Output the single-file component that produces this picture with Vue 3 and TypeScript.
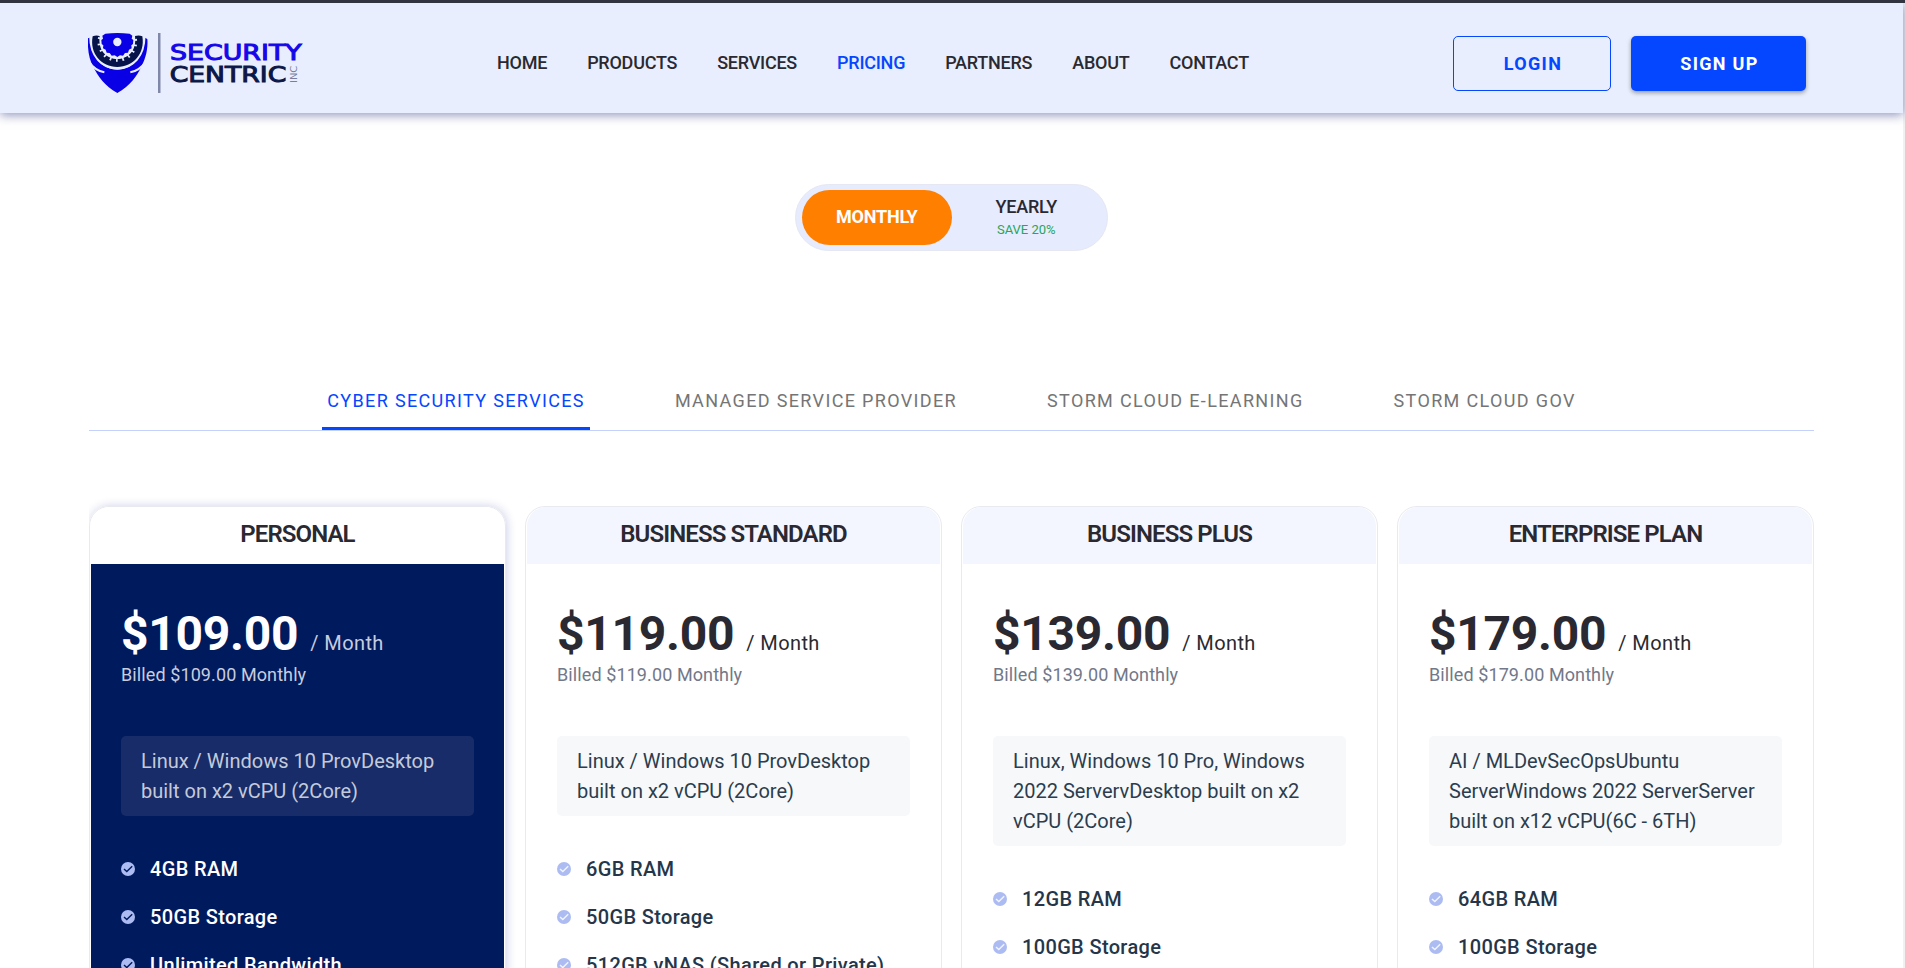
<script setup lang="ts">
import { ref } from 'vue'

interface Plan {
  name: string
  price: string
  description: string
  features: string[]
}

const navItems: string[] = ['HOME', 'PRODUCTS', 'SERVICES', 'PRICING', 'PARTNERS', 'ABOUT', 'CONTACT']
const tabs: string[] = [
  'CYBER SECURITY SERVICES',
  'MANAGED SERVICE PROVIDER',
  'STORM CLOUD E-LEARNING',
  'STORM CLOUD GOV',
]
const activeTab = ref(0)
const yearly = ref(false)

const plans: Plan[] = [
  {
    name: 'PERSONAL',
    price: '$109.00',
    description: 'Linux / Windows 10 ProvDesktop built on x2 vCPU (2Core)',
    features: ['4GB RAM', '50GB Storage', 'Unlimited Bandwidth'],
  },
  {
    name: 'BUSINESS STANDARD',
    price: '$119.00',
    description: 'Linux / Windows 10 ProvDesktop built on x2 vCPU (2Core)',
    features: ['6GB RAM', '50GB Storage', '512GB vNAS (Shared or Private)'],
  },
  {
    name: 'BUSINESS PLUS',
    price: '$139.00',
    description: 'Linux, Windows 10 Pro, Windows 2022 ServervDesktop built on x2 vCPU (2Core)',
    features: ['12GB RAM', '100GB Storage'],
  },
  {
    name: 'ENTERPRISE PLAN',
    price: '$179.00',
    description: 'AI / MLDevSecOpsUbuntu ServerWindows 2022 ServerServer built on x12 vCPU(6C - 6TH)',
    features: ['64GB RAM', '100GB Storage'],
  },
]
</script>

<template>
  <div class="page">
    <header class="header">
      <svg class="logo" viewBox="54 96 651 186" role="img" aria-label="Security Centric Inc">
        <path
          fill="#0a00e6"
          d="M54 115 L62 112 C60 168 96 209 142 209 C188 209 224 168 222 112 L232 117 C235 150 224 182 214 200 C201 228 180 257 142 279 C104 257 83 228 70 200 C58 180 52 150 54 115Z"
        />
        <path fill="none" stroke="#e8eefd" stroke-width="9" d="M62 108 C62 168 96 204 142 204 C188 204 222 168 222 108" />
        <path fill="none" stroke="#e8eefd" stroke-width="6" d="M56 184 Q74 211 103 217 M228 184 Q210 211 181 217" />
        <path fill="#06134a" d="M68 109 Q79 104 89 108 C83 154 112 177 142 177 C172 177 201 154 195 108 Q207 104 217 109 C226 160 190 201 142 201 C94 201 58 160 68 109Z" />
        <circle
          cx="142" cy="126" r="54" fill="none" stroke="#e8eefd" stroke-width="11"
          stroke-dasharray="5 13.85" stroke-dashoffset="11"
        />
        <path
          fill="#0a00e6"
          d="M106 101 Q142 97 179 101 L187 107 L185 116 L190 120 L189 132 L184 136 L185 145 L177 149 L174 158 L165 159 L159 167 L150 166 L142 171 L134 166 L125 167 L119 159 L110 158 L107 149 L99 145 L100 136 L95 132 L94 120 L99 116 L97 107Z"
        />
        <circle cx="142" cy="126" r="12.5" fill="#e8eefd" />
        <rect x="264" y="99" width="7.5" height="180" fill="#8088aa" />
        <g font-family="'DejaVu Sans', sans-serif" font-size="65" stroke-width="3">
          <text x="300" y="179.5" textLength="395" lengthAdjust="spacingAndGlyphs" fill="#1408e8" stroke="#1408e8">SECURITY</text>
          <text x="299" y="246.5" textLength="350" lengthAdjust="spacingAndGlyphs" fill="#0b1747" stroke="#0b1747">CENTRIC</text>
          <text transform="translate(682 249) rotate(-90)" font-size="25" textLength="52" lengthAdjust="spacingAndGlyphs" fill="#777e9e" stroke="none">INC</text>
        </g>
      </svg>
      <nav class="nav">
        <a v-for="item in navItems" :key="item" class="nav-link" :class="{ current: item === 'PRICING' }">{{ item }}</a>
      </nav>
      <div class="actions">
        <button class="button login">LOGIN</button>
        <button class="button signup">SIGN UP</button>
      </div>
    </header>

    <main class="main">
      <div class="toggle">
        <button class="period" :class="{ selected: !yearly }" @click="yearly = false">MONTHLY</button>
        <button class="period" :class="{ selected: yearly }" @click="yearly = true">
          YEARLY
          <span class="saving">SAVE 20%</span>
        </button>
      </div>

      <div class="tabs">
        <button
          v-for="(tab, i) in tabs" :key="tab" class="tab" :class="{ active: activeTab === i }"
          @click="activeTab = i"
        >{{ tab }}</button>
      </div>

      <section class="plans">
        <article v-for="(plan, i) in plans" :key="plan.name" class="card" :class="{ featured: i === 0 }">
          <h2 class="plan-name">{{ plan.name }}</h2>
          <div class="card-body">
            <div class="price-row">
              <span class="price">{{ plan.price }}</span>
              <span class="unit">/ Month</span>
            </div>
            <p class="billed">Billed {{ plan.price }} Monthly</p>
            <p class="description">{{ plan.description }}</p>
            <ul class="features">
              <li v-for="feature in plan.features" :key="feature" class="feature">
                <svg class="check" viewBox="0 0 14 14">
                  <circle cx="7" cy="7" r="7" />
                  <path d="M3 7.1 L5.8 9.6 L11.2 4.2" />
                </svg>
                {{ feature }}
              </li>
            </ul>
          </div>
        </article>
      </section>
    </main>
  </div>
</template>

<style>
html,
body {
  margin: 0;
  overflow: hidden;
}
</style>

<style scoped>
.page {
  box-sizing: border-box;
  height: 968px;
  overflow: hidden;
  border-top: 3px solid #32343f;
  background: linear-gradient(#f1f1f1, #f1f1f1) right / 2px 100% no-repeat #fff;
  font-family: Roboto, sans-serif;
  color: #2a2931;
}
.header {
  position: relative;
  box-sizing: border-box;
  display: flex;
  align-items: flex-start;
  width: 1903px;
  height: 110px;
  padding-left: 88px;
  background: #e8eefd;
  box-shadow: 0 2px 10px rgba(30, 40, 120, 0.5);
}
.logo {
  flex: none;
  width: 217px;
  height: 62px;
  margin-top: 29px;
}
.nav {
  display: flex;
  gap: 40px;
  margin: 49px 0 0 192px;
}
.nav-link {
  font-size: 18px;
  line-height: 21px;
  font-weight: 500;
  letter-spacing: -0.24px;
}
.nav-link.current {
  color: #0546ff;
}
.actions {
  display: flex;
  gap: 20px;
  margin: 33px 97px 0 auto;
}
.button {
  box-sizing: border-box;
  height: 55px;
  padding: 0 0 0 2px;
  border-radius: 5px;
  font: 700 18px/21px Roboto, sans-serif;
  letter-spacing: 1.3px;
}
.login {
  width: 158px;
  border: 1px solid #0546ff;
  background: transparent;
  color: #0546ff;
}
.signup {
  width: 175px;
  border: 0;
  background: #0546ff;
  color: #fff;
  box-shadow: 0 2px 4px rgba(0, 0, 0, 0.35);
}
.main {
  width: 1725px;
  margin-left: 89px;
  padding-top: 71px;
}
.toggle {
  box-sizing: border-box;
  display: flex;
  width: 313px;
  height: 67px;
  margin-left: 706px;
  padding: 5px 6px;
  border: 1px solid #e5e8f2;
  border-radius: 34px;
  background: #e6ebfe;
}
.period {
  flex: 1;
  display: flex;
  flex-direction: column;
  align-items: center;
  justify-content: center;
  height: 55px;
  padding: 0 0 2px;
  border: 0;
  border-radius: 28px;
  background: transparent;
  color: #2a2931;
  font: 500 18px/21px Roboto, sans-serif;
  letter-spacing: -0.2px;
}
.period.selected {
  background: #ff7f00;
  color: #fff;
  font-weight: 700;
}
.saving {
  margin-top: 5px;
  color: #27a65b;
  font-size: 13px;
  line-height: 16px;
  font-weight: 400;
  letter-spacing: 0;
}
.tabs {
  display: flex;
  justify-content: center;
  gap: 80px;
  height: 60px;
  margin-top: 119px;
  border-bottom: 1px solid #c4d2fb;
}
.tab {
  box-sizing: border-box;
  height: 60px;
  padding: 3px 5px 0;
  border: 0;
  border-bottom: 3px solid transparent;
  background: none;
  color: #757575;
  font: 400 18px/21px Roboto, sans-serif;
  letter-spacing: 1.35px;
}
.tab.active {
  border-bottom-color: #0546ff;
  color: #0546ff;
}
.plans {
  display: grid;
  grid-template-columns: repeat(4, 1fr);
  gap: 19px;
  margin-top: 75px;
}
.card {
  height: 700px;
  padding: 0 1px;
  border: 1px solid #e9eaf0;
  border-radius: 20px 20px 0 0;
}
.card.featured {
  box-shadow: 1px 0 10px rgba(30, 40, 150, 0.22);
  clip-path: inset(-14px -20px 0 0);
}
.plan-name {
  height: 57px;
  margin: 0;
  border-radius: 19px 19px 0 0;
  background: #f3f6ff;
  font-size: 24px;
  line-height: 54px;
  font-weight: 600;
  letter-spacing: -0.9px;
  text-align: center;
}
.featured .plan-name {
  background: #fff;
}
.card-body {
  height: 643px;
  padding: 0 30px;
}
.featured .card-body {
  background: #001a5e;
  color: #fff;
}
.price-row {
  display: flex;
  align-items: baseline;
  gap: 12px;
  padding-top: 42px;
  line-height: 56px;
}
.price {
  font-size: 48px;
  font-weight: 700;
  letter-spacing: -0.27px;
}
.unit {
  font-size: 20px;
  letter-spacing: 0.4px;
}
.billed {
  margin: -8px 0 0;
  color: #727889;
  font-size: 18px;
  line-height: 24px;
  letter-spacing: 0.1px;
}
.description {
  margin: 49px 0 0;
  padding: 10px 20px;
  border-radius: 5px;
  background: #f7f8fa;
  color: #2b3d4e;
  font-size: 20px;
  line-height: 30px;
}
.featured .unit,
.featured .billed {
  color: #c8cddd;
}
.featured .description {
  background: #182c69;
  color: #c5cad8;
}
.features {
  margin: 38px 0 0;
  padding: 0;
  list-style: none;
}
.feature {
  display: flex;
  align-items: center;
  gap: 15px;
  height: 30px;
  margin-bottom: 18px;
  color: #25364a;
  font-size: 20px;
  font-weight: 500;
  letter-spacing: 0.35px;
}
.featured .feature {
  color: #fff;
}
.check {
  flex: none;
  width: 14px;
  height: 14px;
}
.check circle {
  fill: #acbcf2;
}
.check path {
  fill: none;
  stroke: #f2f5fe;
  stroke-width: 1.4;
}
.featured .check path {
  stroke: #001a5e;
}
</style>
